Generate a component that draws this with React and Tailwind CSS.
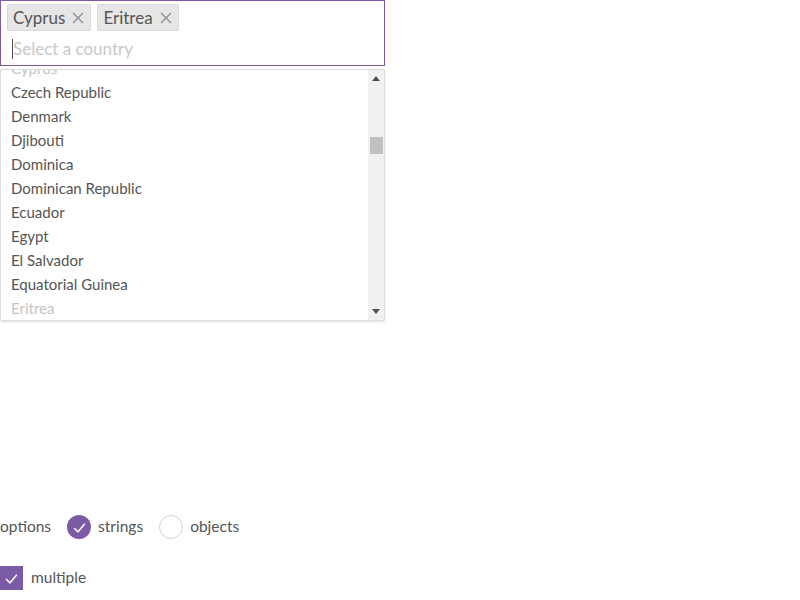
import { useState } from 'react';

const countries = [
  'Cyprus',
  'Czech Republic',
  'Denmark',
  'Djibouti',
  'Dominica',
  'Dominican Republic',
  'Ecuador',
  'Egypt',
  'El Salvador',
  'Equatorial Guinea',
  'Eritrea',
];

const font = { fontFamily: 'Lato, "Source Sans Pro", sans-serif' };

function Tag({ label }) {
  return (
    <span className="flex h-[27px] items-center gap-[7px] rounded-[2px] border border-[#d9d9d9] bg-[#e6e6e6] pl-[5px] pr-[6px] text-[17px] text-[#555]">
      <span className="leading-none">{label}</span>
      <svg width="12" height="12" viewBox="0 0 12 12" className="text-[#888]">
        <path d="M1 1 L11 11 M11 1 L1 11" stroke="currentColor" strokeWidth="1.1" />
      </svg>
    </span>
  );
}

function Check() {
  return (
    <svg width="15" height="15" viewBox="0 0 14 14">
      <path d="M2 7.5 L5.5 11 L12 3.5" fill="none" stroke="white" strokeWidth="1.4" />
    </svg>
  );
}

export default function App() {
  const [selected] = useState(['Cyprus', 'Eritrea']);

  return (
    <div className="h-[600px] w-[800px] bg-white text-[15px] text-[#555]" style={font}>
      <div className="w-[385px]">
        <div className="h-[66px] border border-[#7b5ba5] px-[6px] pt-[3px]">
          <div className="flex gap-[6px]">
            {selected.map((s) => (
              <Tag key={s} label={s} />
            ))}
          </div>
          <div className="relative mt-[6px] flex h-[24px] items-center pl-[6px] text-[17px] text-[#c8c8c8]">
            <span className="absolute left-[5px] top-[2px] h-[20px] w-px bg-[#555]" />
            Select a country
          </div>
        </div>

        <div className="mt-[3px] flex h-[252px] rounded-[2px] border border-[#dcdcdc] shadow-[0_1px_3px_rgba(0,0,0,0.12)]">
          <div className="flex-1 overflow-hidden">
            <div className="mt-[-14px]">
              {countries.map((c) => (
                <div
                  key={c}
                  className={`flex h-[24px] items-center pl-[10px] ${selected.includes(c) ? 'text-[#c4c4c4]' : 'text-[#555]'}`}
                >
                  {c}
                </div>
              ))}
            </div>
          </div>
          <div className="flex w-[16px] flex-col items-center bg-[#f1f1f1]">
            <div className="flex h-[17px] w-full items-center justify-center">
              <svg width="8" height="5" viewBox="0 0 8 5">
                <path d="M0 5 L4 0 L8 5 Z" fill="#505050" />
              </svg>
            </div>
            <div className="mt-[50px] h-[17px] w-[13px] bg-[#c1c1c1]" />
            <div className="flex-1" />
            <div className="flex h-[17px] w-full items-center justify-center">
              <svg width="8" height="5" viewBox="0 0 8 5">
                <path d="M0 0 L4 5 L8 0 Z" fill="#505050" />
              </svg>
            </div>
          </div>
        </div>
      </div>

      <div className="mt-[194px] flex items-center text-[15.5px]">
        <span className="mr-[16px]">options</span>
        <span className="flex h-[24px] w-[24px] items-center justify-center rounded-full bg-[#7b5ba5]">
          <Check />
        </span>
        <span className="ml-[7px] mr-[16px]">strings</span>
        <span className="h-[24px] w-[24px] rounded-full border border-[#d0d0d0]" />
        <span className="ml-[7px]">objects</span>
      </div>

      <div className="mt-[27px] flex items-center text-[15.5px]">
        <span className="flex h-[24px] w-[23px] items-center justify-center bg-[#7b5ba5]">
          <Check />
        </span>
        <span className="ml-[8px]">multiple</span>
      </div>
    </div>
  );
}
